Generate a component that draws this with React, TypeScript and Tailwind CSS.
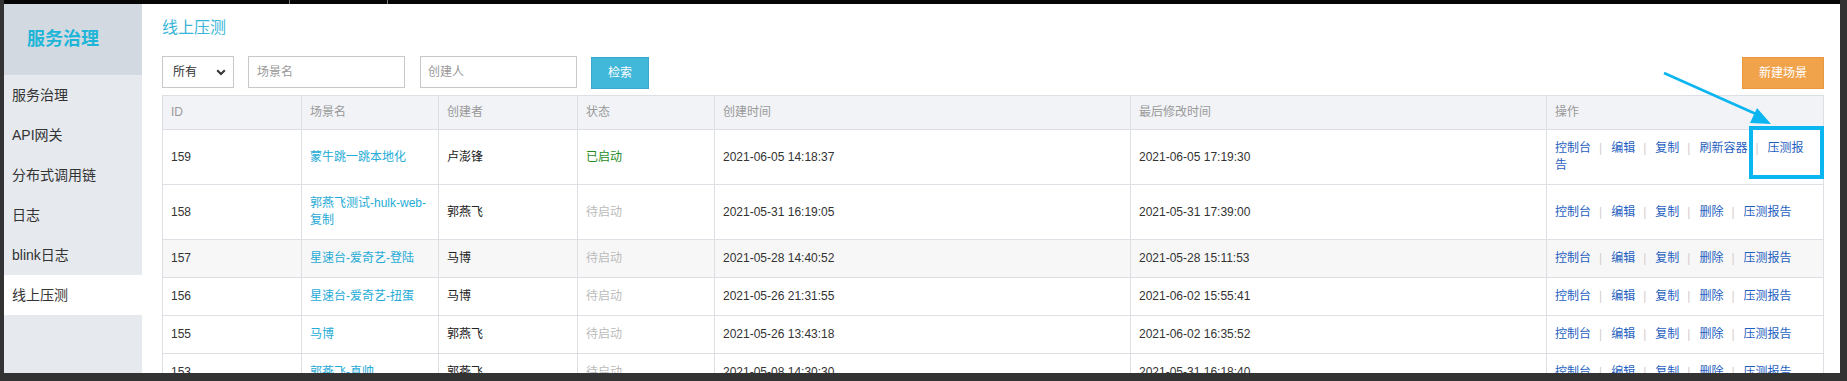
import React from 'react';

type Row = {
  id: number;
  name: string;
  creator: string;
  started: boolean;
  createdAt: string;
  updatedAt: string;
  refresh?: boolean;
  hover?: boolean;
};

const rows: Row[] = [
  { id: 159, name: '蒙牛跳一跳本地化', creator: '卢澎锋', started: true, createdAt: '2021-06-05 14:18:37', updatedAt: '2021-06-05 17:19:30', refresh: true },
  { id: 158, name: '郭燕飞测试-hulk-web-复制', creator: '郭燕飞', started: false, createdAt: '2021-05-31 16:19:05', updatedAt: '2021-05-31 17:39:00' },
  { id: 157, name: '星速台-爱奇艺-登陆', creator: '马博', started: false, createdAt: '2021-05-28 14:40:52', updatedAt: '2021-05-28 15:11:53', hover: true },
  { id: 156, name: '星速台-爱奇艺-扭蛋', creator: '马博', started: false, createdAt: '2021-05-26 21:31:55', updatedAt: '2021-06-02 15:55:41' },
  { id: 155, name: '马博', creator: '郭燕飞', started: false, createdAt: '2021-05-26 13:43:18', updatedAt: '2021-06-02 16:35:52' },
  { id: 153, name: '郭燕飞-真帅', creator: '郭燕飞', started: false, createdAt: '2021-05-08 14:30:30', updatedAt: '2021-05-31 16:18:40' },
];

const menu = ['服务治理', 'API网关', '分布式调用链', '日志', 'blink日志', '线上压测'];

const Sep = () => <span className="ml-[8px] mr-[9px] text-[#d6cccc]">|</span>;

const Ops: React.FC<{ refresh?: boolean }> = ({ refresh }) => (
  <span className="text-[#1f5fbf]">
    控制台<Sep />编辑<Sep />复制<Sep />{refresh ? '刷新容器' : '删除'}<Sep />压测报告
  </span>
);

export default function App() {
  return (
    <div
      className="relative w-[1847px] h-[381px] bg-[#333] overflow-hidden"
      style={{ fontFamily: '"Liberation Sans", "Noto Sans CJK SC", sans-serif' }}
    >
      {/* top bar */}
      <div className="relative ml-[4px] mr-[7px] h-[4px] bg-[#050505]">
        <div className="absolute left-[285px] top-0 w-px h-[4px] bg-[#777]" />
        <div className="absolute left-[383px] top-0 w-px h-[4px] bg-[#777]" />
      </div>

      <div className="ml-[4px] mr-[7px] h-[369px] flex overflow-hidden">
        {/* sidebar */}
        <aside className="w-[138px] shrink-0 bg-[#e6e9ee] flex flex-col">
          <div className="h-[71px] bg-[#d3d9e0] flex items-center pl-[23px] text-[18px] font-bold text-[#1db5d8]">
            服务治理
          </div>
          {menu.map((m) => (
            <div
              key={m}
              className={`h-[40px] flex items-center pl-[8px] text-[14px] text-[#333] ${m === '线上压测' ? 'bg-white' : ''}`}
            >
              {m}
            </div>
          ))}
        </aside>

        {/* main */}
        <main className="flex-1 bg-white pl-[20px] pr-[17px] pt-[12px]">
          <div className="h-[24px] leading-[24px] text-[16px] text-[#3ab5d8]">线上压测</div>

          <div className="mt-[16px] h-[33px] flex items-start text-[12px]">
            <div className="w-[72px] h-[32px] border border-[#c8c8c8] flex items-center justify-between pl-[10px] pr-[7px] text-[#333]">
              <span>所有</span>
              <svg width="10" height="7" viewBox="0 0 10 7">
                <path d="M1.2 1.2 L5 5 L8.8 1.2" fill="none" stroke="#333" strokeWidth="2" />
              </svg>
            </div>
            <div className="ml-[14px] w-[157px] h-[32px] border border-[#c8c8c8] flex items-center pl-[8px] text-[#999]">
              场景名
            </div>
            <div className="ml-[15px] w-[157px] h-[32px] border border-[#c8c8c8] flex items-center pl-[7px] text-[#999]">
              创建人
            </div>
            <div className="ml-[14px] mt-px w-[58px] h-[32px] bg-[#41b7d9] border border-[#36a9cc] flex items-center justify-center text-white">
              检索
            </div>
            <div className="ml-auto mt-px w-[82px] h-[32px] bg-[#f1a34c] border border-[#e8973d] flex items-center justify-center text-white">
              新建场景
            </div>
          </div>

          <table className="mt-[6px] w-[1661px] table-fixed border-collapse text-[12px] leading-[17px]">
            <colgroup>
              <col className="w-[139px]" />
              <col className="w-[137px]" />
              <col className="w-[139px]" />
              <col className="w-[137px]" />
              <col className="w-[416px]" />
              <col className="w-[416px]" />
              <col className="w-[277px]" />
            </colgroup>
            <thead>
              <tr className="bg-[#f2f3f7] text-[#999]">
                {['ID', '场景名', '创建者', '状态', '创建时间', '最后修改时间', '操作'].map((h) => (
                  <th key={h} className="border border-[#dcdfe4] px-2 py-[8px] text-left font-normal">
                    {h}
                  </th>
                ))}
              </tr>
            </thead>
            <tbody>
              {rows.map((r) => (
                <tr key={r.id} className={r.hover ? 'bg-[#f7f7f7]' : 'bg-white'}>
                  <td className="border border-[#dcdfe4] px-2 py-[10px] text-[#333]">{r.id}</td>
                  <td className="border border-[#dcdfe4] px-2 py-[10px] text-[#26abd6]">{r.name}</td>
                  <td className="border border-[#dcdfe4] px-2 py-[10px] text-[#222]">{r.creator}</td>
                  <td className={`border border-[#dcdfe4] px-2 py-[10px] ${r.started ? 'text-[#1e8c1e]' : 'text-[#bbb]'}`}>
                    {r.started ? '已启动' : '待启动'}
                  </td>
                  <td className="border border-[#dcdfe4] px-2 py-[10px] text-[#333]">{r.createdAt}</td>
                  <td className="border border-[#dcdfe4] px-2 py-[10px] text-[#333]">{r.updatedAt}</td>
                  <td className="border border-[#dcdfe4] pl-2 pr-[10px] py-[10px]">
                    <Ops refresh={r.refresh} />
                  </td>
                </tr>
              ))}
            </tbody>
          </table>
        </main>
      </div>

      {/* annotation: highlight box + arrow */}
      <div className="absolute left-[1749px] top-[126px] w-[75px] h-[53px] border-[4px] border-[#0bb5f0]" />
      <svg className="absolute left-0 top-0 pointer-events-none" width="1847" height="381">
        <line x1="1664" y1="73" x2="1756" y2="114" stroke="#0bb5f0" strokeWidth="2.5" />
        <polygon points="1771,124 1750,123 1757,108" fill="#0bb5f0" />
      </svg>
    </div>
  );
}
